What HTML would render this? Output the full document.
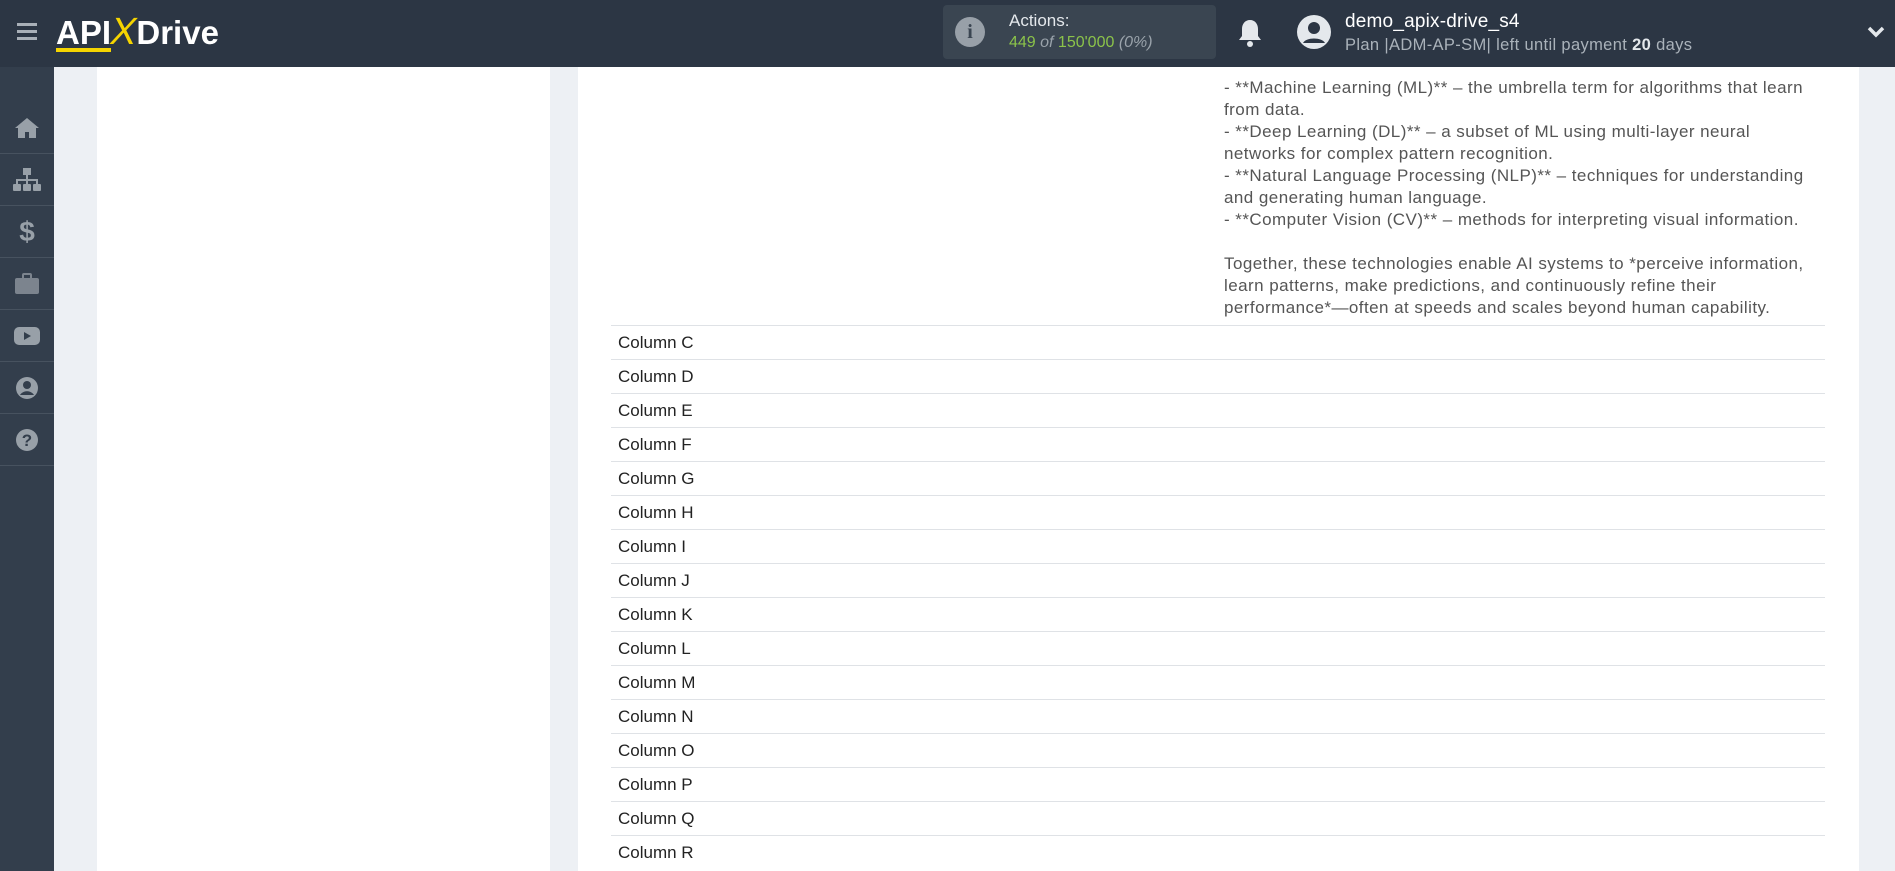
<!DOCTYPE html>
<html><head><meta charset="utf-8"><style>
*{margin:0;padding:0;box-sizing:border-box}
body{width:1895px;height:871px;overflow:hidden;background:#edf0f4;font-family:"Liberation Sans",sans-serif;position:relative}
.hdr{position:absolute;left:0;top:0;width:1895px;height:67px;background:#2c3644}
.side{position:absolute;left:0;top:67px;width:54px;height:804px;background:#333e4c}
.side .it{height:52px;border-bottom:1px solid #47525f;display:flex;align-items:center;justify-content:center}
.lp{position:absolute;left:97px;top:67px;width:453px;height:804px;background:#fff}
.rp{position:absolute;left:578px;top:67px;width:1281px;height:804px;background:#fff}
.txt{position:absolute;left:1224px;top:77px;width:600px;font-size:17px;letter-spacing:0.45px;line-height:22px;color:#555}
.row{position:absolute;left:611px;width:1214px;height:34px;border-top:1px solid #dfe2e6;font-size:17px;color:#222;padding-left:7px;line-height:33px}
</style></head><body>
<div class="hdr">
 <div style="position:absolute;left:17px;top:23px;width:20px;height:3px;background:#a9b0b8;box-shadow:0 7px 0 #a9b0b8,0 14px 0 #a9b0b8"></div>
 <div style="position:absolute;left:56px;top:11px;font-size:33px;font-weight:bold;color:#fff;letter-spacing:0px">API<span style="color:#f5d400;font-weight:normal;font-size:38px;display:inline-block;transform:skewX(-12deg)">X</span>Drive</div>
 <div style="position:absolute;left:56px;top:48px;width:55px;height:4px;background:#f5d400"></div>
 <div style="position:absolute;left:943px;top:5px;width:273px;height:54px;background:#3a4551;border-radius:4px">
  <div style="position:absolute;left:12px;top:12px;width:30px;height:30px;border-radius:50%;background:#98a0a8;color:#3a4551;font-weight:bold;font-size:20px;text-align:center;line-height:30px;font-family:'Liberation Serif',serif">i</div>
  <div style="position:absolute;left:66px;top:6px;font-size:17px;color:#e4e8ec">Actions:</div>
  <div style="position:absolute;left:66px;top:29px;font-size:16px;color:#8bc34a">449 <i style="color:#9aa3ab">of</i> 150'000 <i style="color:#9aa3ab">(0%)</i></div>
 </div>
 <svg style="position:absolute;left:1237px;top:18px" width="26" height="30" viewBox="0 0 26 30"><path d="M13 2c-5 0-8 4-8 9v7l-3 4h22l-3-4v-7c0-5-3-9-8-9z" fill="#e4e8ec"/><circle cx="13" cy="26" r="3" fill="#e4e8ec"/></svg>
 <svg style="position:absolute;left:1296px;top:14px" width="36" height="36" viewBox="0 0 36 36"><circle cx="18" cy="18" r="17" fill="#e4e8ec"/><circle cx="18" cy="14" r="6" fill="#2c3644"/><path d="M7 29c3-6 19-6 22 0" fill="#2c3644"/></svg>
 <div style="position:absolute;left:1345px;top:11px;font-size:19px;color:#fff;letter-spacing:0.2px">demo_apix-drive_s4</div>
 <div style="position:absolute;left:1345px;top:36px;font-size:16.5px;color:#aab2ba;letter-spacing:0.35px">Plan |ADM-AP-SM| left until payment <b style="color:#e4e8ec">20</b> days</div>
 <svg style="position:absolute;left:1867px;top:26px" width="18" height="12" viewBox="0 0 18 12"><path d="M2 2l7 7 7-7" stroke="#e4e8ec" stroke-width="3.5" fill="none"/></svg>
</div>
<div class="side"><div style="height:35px"></div>
 <div class="it"><svg width="26" height="22" viewBox="0 0 26 22"><path d="M13 1L1 11h3v10h7v-6h4v6h7V11h3z" fill="#98a0a8"/></svg></div>
 <div class="it"><svg width="28" height="24" viewBox="0 0 28 24"><rect x="10" y="0" width="8" height="7" fill="#98a0a8"/><path d="M14 7v5M4 17v-5h20v5M14 12v5" stroke="#98a0a8" stroke-width="2" fill="none"/><rect x="0" y="16" width="8" height="7" rx="1" fill="#98a0a8"/><rect x="10" y="16" width="8" height="7" rx="1" fill="#98a0a8"/><rect x="20" y="16" width="8" height="7" rx="1" fill="#98a0a8"/></svg></div>
 <div class="it"><span style="color:#98a0a8;font-size:28px;font-weight:bold">$</span></div>
 <div class="it"><svg width="26" height="22" viewBox="0 0 26 22"><rect x="9" y="1" width="8" height="5" rx="1" fill="none" stroke="#7c848e" stroke-width="2"/><rect x="1" y="5" width="24" height="16" rx="2" fill="#7c848e"/></svg></div>
 <div class="it"><svg width="26" height="20" viewBox="0 0 26 20"><rect x="0" y="1" width="26" height="18" rx="5" fill="#98a0a8"/><path d="M10 6l7 4-7 4z" fill="#333e4c"/></svg></div>
 <div class="it"><svg width="24" height="24" viewBox="0 0 24 24"><circle cx="12" cy="12" r="11" fill="#98a0a8"/><circle cx="12" cy="9" r="4" fill="#333e4c"/><path d="M5 19c3-5 11-5 14 0" fill="#333e4c"/></svg></div>
 <div class="it"><svg width="24" height="24" viewBox="0 0 24 24"><circle cx="12" cy="12" r="11" fill="#98a0a8"/><text x="12" y="18" text-anchor="middle" font-size="17" font-weight="bold" fill="#333e4c" font-family="Liberation Sans">?</text></svg></div>
</div>
<div class="lp"></div>
<div class="rp"></div>
<div class="txt">- **Machine Learning (ML)** – the umbrella term for algorithms that learn<br>from data.<br>- **Deep Learning (DL)** – a subset of ML using multi-layer neural<br>networks for complex pattern recognition.<br>- **Natural Language Processing (NLP)** – techniques for understanding<br>and generating human language.<br>- **Computer Vision (CV)** – methods for interpreting visual information.<br><br>Together, these technologies enable AI systems to *perceive information,<br>learn patterns, make predictions, and continuously refine their<br>performance*—often at speeds and scales beyond human capability.</div>
<div class="row" style="top:325px">Column C</div>
<div class="row" style="top:359px">Column D</div>
<div class="row" style="top:393px">Column E</div>
<div class="row" style="top:427px">Column F</div>
<div class="row" style="top:461px">Column G</div>
<div class="row" style="top:495px">Column H</div>
<div class="row" style="top:529px">Column I</div>
<div class="row" style="top:563px">Column J</div>
<div class="row" style="top:597px">Column K</div>
<div class="row" style="top:631px">Column L</div>
<div class="row" style="top:665px">Column M</div>
<div class="row" style="top:699px">Column N</div>
<div class="row" style="top:733px">Column O</div>
<div class="row" style="top:767px">Column P</div>
<div class="row" style="top:801px">Column Q</div>
<div class="row" style="top:835px">Column R</div>
</body></html>
